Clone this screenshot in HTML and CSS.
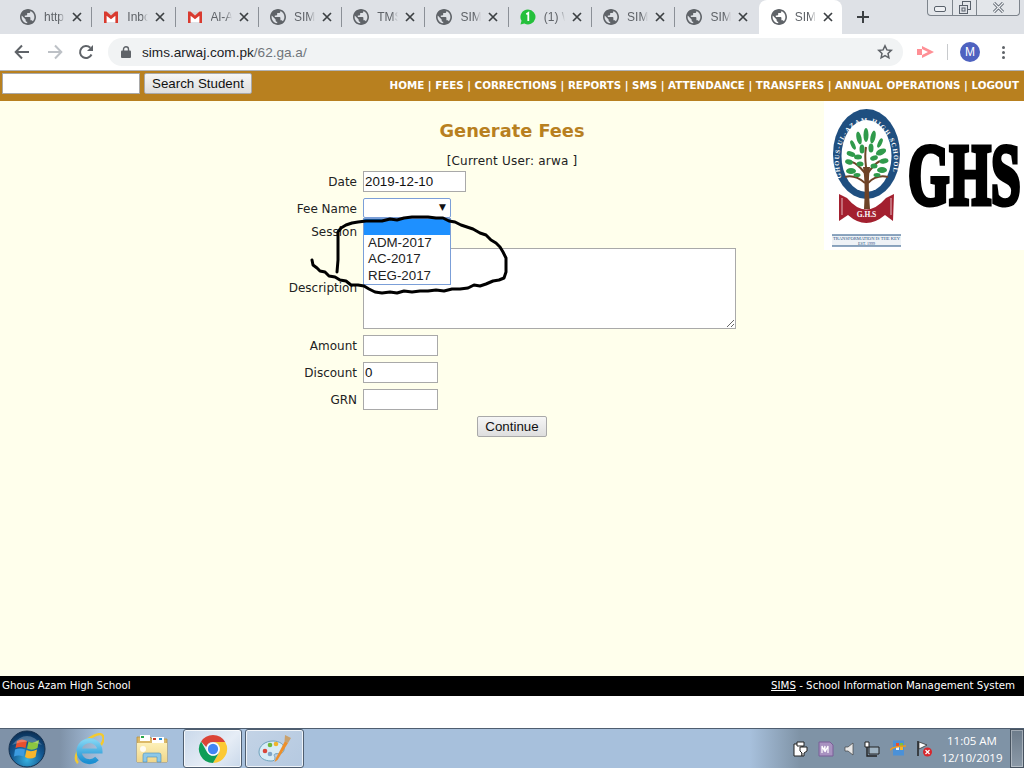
FILE: index.html
```html
<!DOCTYPE html>
<html lang="en">
<head>
  <meta charset="UTF-8">
  <title>Generate Fees | SIMS</title>
  <link rel="stylesheet" href="styles.css">
</head>
<body>

<svg class="defs" width="0" height="0">
  <symbol id="globe" viewBox="2 2 20 20"><path fill="#5f6368" d="M12 2C6.48 2 2 6.48 2 12s4.48 10 10 10 10-4.48 10-10S17.52 2 12 2zm-1 17.93c-3.95-.49-7-3.85-7-7.93 0-.62.08-1.21.21-1.79L9 15v1c0 1.1.9 2 2 2v1.93zm6.9-2.54c-.26-.81-1-1.39-1.9-1.39h-1v-3c0-.55-.45-1-1-1H8v-2h2c.55 0 1-.45 1-1V7h2c1.1 0 2-.9 2-2v-.41c2.93 1.19 5 4.06 5 7.41 0 2.08-.8 3.97-2.1 5.39z"/></symbol>
  <symbol id="gmail" viewBox="0 0 16 16"><path fill="#d6d6d6" d="M3 3h10v10H3z"/><path fill="#fff" d="M3 3l5 4 5-4v10H3z"/><path fill="#d93a2f" d="M1 2.500h2.500L8 6.500l4.500-4H15V14h-2.600V6.800L8 10.300 3.600 6.800V14H1z"/></symbol>
  <symbol id="whatsapp" viewBox="0 0 16 16"><path fill="#25c03c" d="M8 .5a7.500 7.500 0 1 1-3.600 14.100L.5 15.500l1-3.700A7.500 7.500 0 0 1 8 .5z"/><path fill="none" stroke="#fff" stroke-width="1.800" d="M6.300 5.200 8.300 3.900V12"/></symbol>
  <symbol id="close" viewBox="0 0 10 10"><path stroke="#3c4043" stroke-width="1.700" d="M1 1l8 8M9 1l-8 8"/></symbol>
</svg>

<div class="tab-strip">
  <div class="tab"><svg class="fav"><use href="#globe"/></svg><span class="tab-title">http</span><svg class="tab-x"><use href="#close"/></svg></div>
  <div class="tab"><svg class="fav"><use href="#gmail"/></svg><span class="tab-title">Inbo</span><svg class="tab-x"><use href="#close"/></svg></div>
  <div class="tab"><svg class="fav"><use href="#gmail"/></svg><span class="tab-title">Al-A</span><svg class="tab-x"><use href="#close"/></svg></div>
  <div class="tab"><svg class="fav"><use href="#globe"/></svg><span class="tab-title">SIM</span><svg class="tab-x"><use href="#close"/></svg></div>
  <div class="tab"><svg class="fav"><use href="#globe"/></svg><span class="tab-title">TMS</span><svg class="tab-x"><use href="#close"/></svg></div>
  <div class="tab"><svg class="fav"><use href="#globe"/></svg><span class="tab-title">SIM</span><svg class="tab-x"><use href="#close"/></svg></div>
  <div class="tab"><svg class="fav"><use href="#whatsapp"/></svg><span class="tab-title">(1) W</span><svg class="tab-x"><use href="#close"/></svg></div>
  <div class="tab"><svg class="fav"><use href="#globe"/></svg><span class="tab-title">SIM</span><svg class="tab-x"><use href="#close"/></svg></div>
  <div class="tab no-sep"><svg class="fav"><use href="#globe"/></svg><span class="tab-title">SIM</span><svg class="tab-x"><use href="#close"/></svg></div>
  <div class="tab active"><svg class="fav"><use href="#globe"/></svg><span class="tab-title">SIM</span><svg class="tab-x"><use href="#close"/></svg></div>
  <svg class="new-tab" width="14" height="14" viewBox="0 0 14 14"><path stroke="#3c4043" stroke-width="2" d="M7 1v12M1 7h12"/></svg>
  <div class="win-controls">
    <div class="win-btn min"><svg width="12" height="6" viewBox="0 0 12 6"><rect x=".5" y=".5" width="11" height="5" rx="1.500" fill="#eef0f3" stroke="#59616b"/></svg></div>
    <div class="win-btn max"><svg width="12" height="13" viewBox="0 0 12 13"><rect x="3.500" y=".5" width="8" height="8" fill="none" stroke="#59616b"/><rect x=".5" y="4.500" width="8" height="8" fill="#dee1e6" stroke="#59616b"/><rect x="3" y="7" width="3" height="3" fill="none" stroke="#59616b"/></svg></div>
    <div class="win-btn shut"><svg width="13" height="11" viewBox="0 0 13 11"><path d="M2 1l9 9M11 1l-9 9" stroke="#59616b" stroke-width="3"/><path d="M2 1l9 9M11 1l-9 9" stroke="#eef0f3" stroke-width="1.200"/></svg></div>
  </div>
</div>

<div class="toolbar">
  <svg class="tool-icon" width="16" height="16" viewBox="0 0 16 16"><path fill="none" stroke="#5f6368" stroke-width="2" d="M15 8H2M8 1.500 1.700 8 8 14.500"/></svg>
  <svg class="tool-icon forward" width="16" height="16" viewBox="0 0 16 16"><path fill="none" stroke="#bdc1c6" stroke-width="2" d="M1 8h13M8 1.500 14.300 8 8 14.500"/></svg>
  <svg class="tool-icon reload" width="16" height="16" viewBox="0 0 16 16"><path fill="none" stroke="#5f6368" stroke-width="2" d="M13.500 10.500A6 6 0 1 1 12.300 3.800"/><path fill="#5f6368" d="M15 1v6H9z"/></svg>
  <div class="omnibox">
    <svg class="lock" width="10" height="12" viewBox="0 0 10 12"><path fill="none" stroke="#5f6368" stroke-width="1.400" d="M2.500 5V3.300a2.500 2.500 0 0 1 5 0V5"/><rect y="4.500" width="10" height="7.500" rx="1" fill="#5f6368"/></svg>
    <span class="url">sims.arwaj.com.pk<span class="url-path">/62.ga.a/</span></span>
    <svg class="star" width="16" height="16" viewBox="0 0 16 16"><path fill="none" stroke="#5f6368" stroke-width="1.500" d="M8 1.800l1.900 4.100 4.400.5-3.300 3 .9 4.500L8 11.700l-3.900 2.200.9-4.500-3.300-3 4.400-.5z"/></svg>
  </div>
  <svg class="ext" width="17" height="12" viewBox="0 0 17 12"><path fill="#ff8f95" d="M0 3h5v6H0z"/><path fill="#ff8f95" d="M5 0l12 6-12 6V9l6-3-6-3z"/></svg>
  <span class="tool-sep"></span>
  <span class="avatar">M</span>
  <span class="kebab"><i></i><i></i><i></i></span>
</div>

<div class="page">
  <div class="top-nav">
    <form class="search">
      <input class="search-box" type="text">
      <button class="btn" type="button">Search Student</button>
    </form>
    <div class="links">HOME | FEES | CORRECTIONS | REPORTS | SMS | ATTENDANCE | TRANSFERS | ANNUAL OPERATIONS | LOGOUT</div>
  </div>

  <div class="content">
    <svg class="logo" width="200" height="149" viewBox="0 0 200 149">
      <rect width="200" height="149" fill="#fff"/>
      <ellipse cx="42.500" cy="53" rx="33.500" ry="45" fill="#1f4f80"/>
      <ellipse cx="42.500" cy="55" rx="25" ry="36" fill="#fff"/>
      <path id="ringText" d="M18 78A27.500 39 0 1 1 67 78" fill="none"/>
      <text class="ring-text"><textPath href="#ringText" startOffset="1%">GHOUS-UL-AZAM HIGH SCHOOL</textPath></text>
      <path d="M15 93 L23 97 Q42 120 62 97 L70 93 L69 120 L61 114 Q42 130 24 114 L15 120z" fill="#a3202f"/>
      <path d="M18 97 L18 114 M67 97 L67 114" stroke="#fff" stroke-width=".7"/>
      <path d="M40 108 C41 92 41 80 39 66 L46 66 C44 80 45 92 46 108z" fill="#6e4327"/>
      <path d="M41 82 C34 76 28 74 21 76 M44 82 C50 76 56 74 64 76 M41 72 C36 66 32 62 28 61 M44 72 C48 66 52 62 56 60 M42 66 C41 58 41 52 42 46" fill="none" stroke="#6e4327" stroke-width="2"/>
      <g fill="#2f9a4b">
        <ellipse cx="42" cy="34" rx="2.500" ry="7"/><ellipse cx="35" cy="37" rx="2.500" ry="6.500" transform="rotate(-12 35 37)"/><ellipse cx="49" cy="36" rx="2.500" ry="6.500" transform="rotate(12 49 36)"/>
        <ellipse cx="29" cy="44" rx="2" ry="5" transform="rotate(-25 29 44)"/><ellipse cx="56" cy="42" rx="2" ry="5" transform="rotate(25 56 42)"/><ellipse cx="38" cy="48" rx="2.500" ry="4.500"/>
        <ellipse cx="47" cy="47" rx="2.500" ry="4.500"/><ellipse cx="27" cy="53" rx="4.500" ry="2.500" transform="rotate(20 27 53)"/><ellipse cx="57" cy="51" rx="5.500" ry="3" transform="rotate(-25 57 51)"/>
        <ellipse cx="34" cy="56" rx="4" ry="2.500"/><ellipse cx="50" cy="57" rx="4" ry="2.500" transform="rotate(-20 50 57)"/><ellipse cx="25" cy="61" rx="4" ry="2.500" transform="rotate(15 25 61)"/>
        <ellipse cx="60" cy="60" rx="4.500" ry="2.500" transform="rotate(-10 60 60)"/><ellipse cx="36" cy="63" rx="3.500" ry="2.500"/><ellipse cx="50" cy="65" rx="3.500" ry="2.500"/>
        <ellipse cx="27" cy="70" rx="5" ry="3"/><ellipse cx="58" cy="69" rx="5" ry="3"/><ellipse cx="33" cy="74" rx="3.500" ry="2"/><ellipse cx="53" cy="74" rx="3.500" ry="2"/>
      </g>
      <text class="badge-ghs" x="42.500" y="116" text-anchor="middle">G.H.S</text>
      <rect x="8" y="134" width="69" height="11" fill="#eef2f6"/>
      <path d="M8 134h69M8 145h69" stroke="#1f4f80" stroke-width="1"/>
      <text class="badge-motto" x="42.500" y="139" text-anchor="middle" textLength="67" lengthAdjust="spacingAndGlyphs">TRANSFORMATION IS THE KEY</text>
      <text class="badge-est" x="42.500" y="144" text-anchor="middle">EST. 1999</text>
      <text class="logo-ghs" transform="translate(84 103) scale(.62 1)">GHS</text>
    </svg>

    <h1 class="title">Generate Fees</h1>
    <div class="current-user">[Current User: arwa ]</div>

    <form class="fee-form">
      <label>Date</label>
      <div><input class="field date" type="text" value="2019-12-10"></div>

      <label>Fee Name</label>
      <div class="select-wrap">
        <div class="select-box"><span class="caret">▼</span></div>
        <ul class="select-menu">
          <li class="on">&nbsp;</li>
          <li>ADM-2017</li>
          <li>AC-2017</li>
          <li>REG-2017</li>
        </ul>
      </div>

      <label class="session-label">Session</label>
      <div class="session-slot"></div>

      <label class="mid">Description</label>
      <div><textarea class="field notes"></textarea></div>

      <label>Amount</label>
      <div><input class="field short" type="text"></div>

      <label>Discount</label>
      <div><input class="field short" type="text" value="0"></div>

      <label>GRN</label>
      <div><input class="field short" type="text"></div>

      <div class="form-actions"><button class="btn" type="button">Continue</button></div>
    </form>

    <svg class="scribble" width="210" height="90" viewBox="300 210 210 90">
      <polyline points="312,260 313,265 317,268 320,271 325,272 329,276 335,277 340,280 346,281 351,285 358,285 364,286 369,289 375,292 382,293 390,292 397,293 404,291 412,292 420,291 428,291 436,290 444,291 452,289 460,289 468,288 474,285 480,286 486,284 493,281 499,280 504,278 506,272 506,265 506,258 503,252 500,247 496,243 491,240 486,235 480,233 473,229 467,227 461,225 455,222 449,221 443,218 436,218 428,217 420,217 412,217 404,218 397,220 390,219 382,221 374,221 366,221 358,222 352,223 346,225 341,228 338,232 338,240 338,250 338,260 337,272" fill="none" stroke="#000" stroke-width="3" stroke-linejoin="round" stroke-linecap="round"/>
    </svg>
  </div>

  <div class="footer">
    <span>Ghous Azam High School</span>
    <span><u>SIMS</u> - School Information Management System</span>
  </div>
  <div class="page-end"></div>
</div>

<div class="taskbar">
  <svg class="orb" width="38" height="38" viewBox="0 0 38 38">
    <defs>
      <radialGradient id="orbFill" cx=".5" cy=".8" r=".8"><stop offset="0" stop-color="#36b0e0"/><stop offset=".55" stop-color="#13568f"/><stop offset="1" stop-color="#0b2d52"/></radialGradient>
      <linearGradient id="ieBlue" x1="0" y1="0" x2="0" y2="1"><stop offset="0" stop-color="#7fd3f2"/><stop offset="1" stop-color="#1b8fd2"/></linearGradient>
      <linearGradient id="folderBody" x1="0" y1="0" x2="0" y2="1"><stop offset="0" stop-color="#fdf0b8"/><stop offset="1" stop-color="#f0d68a"/></linearGradient>
    </defs>
    <circle cx="19" cy="19" r="18" fill="url(#orbFill)" stroke="#16314f"/>
    <path d="M9 11 Q14 8 19 11 L17.500 18 Q12 16 7.500 18z" fill="#e8502e"/>
    <path d="M20.500 11.500 Q25 14 31 10 L29.500 18 Q24 21 19 18.500z" fill="#8cc63f"/>
    <path d="M7 19.500 Q12 17.500 17 19.500 L15.500 26.500 Q10.500 24.500 6 26.500z" fill="#3c9be0"/>
    <path d="M18.500 20 Q23 22.500 29 19.500 L27.500 27 Q22 30 17 27z" fill="#f7b52b"/>
    <path d="M4 15 Q19 -3 34 15 Q19 8 4 15z" fill="#fff" opacity=".25"/>
  </svg>
  <svg class="task-icon ie" width="30" height="32" viewBox="0 0 30 32">
    <path d="M4 30C-2 25 6 12 13 7 20 2 27 -1 29 3c1 2 0 6-2 9" fill="none" stroke="#f3c92f" stroke-width="2.400"/>
    <path d="M7.500 18H26A10.500 10.500 0 1 0 23 25.500" fill="none" stroke="url(#ieBlue)" stroke-width="5"/>
  </svg>
  <svg class="task-icon folder" width="32" height="29" viewBox="0 0 32 29">
    <path d="M1 3h13l2 2h15v23H1z" fill="#dcb968" stroke="#b79243" stroke-width=".8"/>
    <rect x="4" y="1" width="10" height="6" fill="#fff"/><rect x="5" y="2" width="3" height="2" fill="#2aa84a"/>
    <rect x="16" y="3" width="12" height="6" fill="#fff"/><rect x="17" y="4" width="3" height="2" fill="#c63a2b"/><rect x="23" y="4" width="3" height="2" fill="#2490d8"/>
    <path d="M1 9h30v19H1z" fill="url(#folderBody)"/>
    <path d="M7 28v-7a2 2 0 0 1 2-2h14a2 2 0 0 1 2 2v7h-4v-5H11v5z" fill="#8cc8e8" stroke="#4b8fb8" stroke-width=".6"/>
    <circle cx="7" cy="15" r="3" fill="#fff" opacity=".85"/>
  </svg>
  <div class="task-btn chrome">
    <svg width="30" height="30" viewBox="0 0 32 32">
      <path d="M16 1a15 15 0 0 1 13 7.500H16a7.500 7.500 0 0 0-7.200 5.300L3.300 8A15 15 0 0 1 16 1z" fill="#db4437"/>
      <path d="M29 8.500A15 15 0 0 1 16 31l6.500-11.300A7.500 7.500 0 0 0 22.200 12 7.500 7.500 0 0 0 16 8.500z" fill="#fcc934"/>
      <path d="M3.300 8l6.500 11.800A7.500 7.500 0 0 0 22.500 19.700L16 31A15 15 0 0 1 3.300 8z" fill="#0f9d58"/>
      <circle cx="16" cy="16" r="6.800" fill="#fff"/><circle cx="16" cy="16" r="5.500" fill="#4285f4"/>
    </svg>
  </div>
  <div class="task-btn paint">
    <svg width="34" height="30" viewBox="0 0 34 30">
      <path d="M15 7C7 7 1 12 1 18c0 6 6 9 12 9 3 0 4-1 4-3 0-2-2-3 0-4 2-1 8 1 9-4 1-6-5-9-11-9z" fill="#d8ecf6" stroke="#6fa2bd"/>
      <circle cx="7" cy="17" r="2.300" fill="#d9463a"/><circle cx="12" cy="11" r="2.300" fill="#6fb83f"/><circle cx="18" cy="10" r="2.300" fill="#efb52c"/><circle cx="12" cy="20" r="2.300" fill="#7ea6c9"/>
      <path d="M27 7 18 24l-1.500 4 3-2L30 9z" fill="#ed8f2a"/>
      <path d="M26.500 7.500 27 1l6 3-3 5z" fill="#caa16c"/>
    </svg>
  </div>
  <div class="tray">
    <svg width="15" height="16" viewBox="0 0 15 16"><path d="M1 3h8v12H1z" fill="#fff" stroke="#222"/><path d="M4 1h7v4H4z" fill="#fff" stroke="#222"/><path d="M7 6h7v4l-3 2v3H9v-3L7 10z" fill="#fff" stroke="#222"/></svg>
    <svg width="16" height="16" viewBox="0 0 16 16"><path d="M1 1h11l3 3v11H1z" fill="#a892c0" stroke="#7a5e98"/><path d="M4 12V5l2 4 1-4v6l3-6v7" fill="none" stroke="#fff" stroke-width="1.200"/></svg>
    <svg width="10" height="14" viewBox="0 0 10 14"><path d="M1 5h3l5-4v12l-5-4H1z" fill="#e8e8e8" stroke="#444" stroke-width=".7"/></svg>
    <svg width="16" height="16" viewBox="0 0 16 16"><path d="M5 6h10v7H5z" fill="#9fb3c2" stroke="#222"/><path d="M1 1h4v5H1z" fill="#fff" stroke="#222"/><path d="M3 6v9h10M7 15h6" fill="none" stroke="#222" stroke-width="1.400"/></svg>
    <svg width="16" height="17" viewBox="0 0 16 17"><rect x="3" y="0.500" width="11" height="15" fill="#4a91d8"/><path d="M6 3h3v3H6z" fill="#e8502e"/><path d="M10 3h3v3h-3z" fill="#7ebd3c"/><path d="M6 7h3v3H6z" fill="#e8f2fb"/><path d="M10 7h3v3h-3z" fill="#f7b52b"/><path d="M0 10c3-3 9-4 16-4" fill="none" stroke="#ef9a1e" stroke-width="1.600"/></svg>
    <svg width="16" height="17" viewBox="0 0 16 17"><path d="M2 1v15" stroke="#222" stroke-width="1.500"/><path d="M3 2l8 3-8 4z" fill="#fff" stroke="#222" stroke-width=".7"/><circle cx="11.500" cy="12" r="4.500" fill="#d8262c"/><path d="M9.500 10l4 4M13.500 10l-4 4" stroke="#fff" stroke-width="1.200"/></svg>
  </div>
  <div class="clock">
    <span>11:05 AM</span>
    <span>12/10/2019</span>
  </div>
  <div class="show-desktop"></div>
</div>

</body>
</html>
```

FILE: styles.css
```css
* {
  box-sizing: border-box;
}
html, body {
  margin: 0;
  height: 100%;
}
body {
  width: 1024px;
  height: 768px;
  overflow: hidden;
  display: flex;
  flex-direction: column;
  font-family: "DejaVu Sans", Verdana, sans-serif;
  font-size: 12px;
}
.defs {
  display: block;
  height: 0;
}

/* browser tabs */
.tab-strip {
  height: 34px;
  flex: none;
  display: flex;
  align-items: center;
  padding-left: 9px;
  background: #dee1e6;
  font-family: "Liberation Sans", Arial, sans-serif;
}
.tab {
  width: 83.3px;
  height: 34px;
  flex: none;
  display: flex;
  align-items: center;
  padding-left: 11px;
  background-image: linear-gradient(#8b9097, #8b9097);
  background-repeat: no-repeat;
  background-size: 1px 20px;
  background-position: right 7px;
}
.tab.no-sep {
  background-image: none;
}
.tab.active {
  background: #fff;
  border-radius: 8px 8px 0 0;
  padding-left: 12px;
}
.fav {
  width: 16px;
  height: 16px;
  flex: none;
  margin-right: 8px;
}
.tab-title {
  width: 21px;
  flex: none;
  white-space: nowrap;
  font-size: 12px;
  color: #5f6368;
  -webkit-mask-image: linear-gradient(to right, #000 70%, transparent);
  mask-image: linear-gradient(to right, #000 70%, transparent);
}
.tab-x {
  width: 10px;
  height: 10px;
  flex: none;
  margin-left: 7px;
}
.new-tab {
  margin-left: 14px;
  flex: none;
}
.win-controls {
  margin-left: auto;
  margin-right: 4px;
  align-self: flex-start;
  display: flex;
  width: 93px;
  height: 16px;
  border: 1px solid #7d848c;
  border-top: none;
  border-radius: 0 0 4px 4px;
  background: #e3e6ea;
}
.win-btn {
  display: flex;
  align-items: center;
  justify-content: center;
  border-right: 1px solid #7d848c;
}
.win-btn.min {
  width: 25px;
  padding-top: 3px;
}
.win-btn.max {
  width: 24px;
}
.win-btn.shut {
  flex: 1;
  border-right: none;
}

/* address bar */
.toolbar {
  height: 37px;
  flex: none;
  display: flex;
  align-items: center;
  background: #fff;
  border-bottom: 1px solid #b1b3b6;
  padding-left: 14px;
}
.tool-icon {
  flex: none;
}
.forward {
  margin-left: 17px;
}
.reload {
  margin-left: 15px;
}
.omnibox {
  width: 795px;
  height: 28px;
  margin-left: 14px;
  flex: none;
  display: flex;
  align-items: center;
  padding-left: 13px;
  background: #f1f3f4;
  border-radius: 14px;
}
.lock {
  flex: none;
}
.url {
  margin-left: 11px;
  font-family: "Liberation Sans", Arial, sans-serif;
  font-size: 13.6px;
  color: #202124;
}
.url-path {
  color: #70757a;
}
.star {
  margin-left: auto;
  margin-right: 10px;
}
.ext {
  margin-left: 14px;
  flex: none;
}
.tool-sep {
  width: 1px;
  height: 16px;
  margin-left: 13px;
  background: #c8cacd;
}
.avatar {
  width: 20px;
  height: 20px;
  margin-left: 12px;
  border-radius: 50%;
  background: #4e62c0;
  color: #fff;
  font-family: "Liberation Sans", Arial, sans-serif;
  font-size: 12px;
  line-height: 20px;
  text-align: center;
}
.kebab {
  margin-left: 22px;
  display: flex;
  flex-direction: column;
  gap: 2px;
}
.kebab i {
  width: 3px;
  height: 3px;
  border-radius: 50%;
  background: #5f6368;
}

/* the page itself */
.page {
  flex: 1;
  display: flex;
  flex-direction: column;
  min-height: 0;
}
.top-nav {
  height: 30px;
  flex: none;
  display: flex;
  align-items: flex-start;
  justify-content: space-between;
  background: #b8801f;
  padding: 2px 5px 0 2px;
}
.search {
  display: flex;
  gap: 4px;
}
.search-box {
  width: 138px;
  height: 21px;
  border: 1px solid #a9a9a9;
  background: #fff;
  padding: 0;
}
.btn {
  height: 21px;
  padding: 0 7px;
  border: 1px solid #a9a9a9;
  border-radius: 2px;
  background: linear-gradient(#f6f6f6, #dedede);
  color: #111;
  font-family: "Liberation Sans", Arial, sans-serif;
  font-size: 13.33px;
  line-height: 18px;
}
.links {
  margin-top: 6px;
  color: #fff;
  font-weight: bold;
  font-size: 10.3px;
  white-space: nowrap;
}
.content {
  position: relative;
  flex: 1;
  background: #ffffec;
  min-height: 0;
}
.logo {
  position: absolute;
  left: 824px;
  top: 0;
}
.ring-text {
  font-family: "Liberation Serif", serif;
  font-weight: bold;
  font-size: 6.5px;
  fill: #fff;
  letter-spacing: 1.1px;
}
.badge-ghs {
  font-family: "Liberation Serif", serif;
  font-weight: bold;
  font-size: 7.5px;
  fill: #fff;
}
.badge-motto {
  font-family: "Liberation Serif", serif;
  font-size: 5px;
  fill: #1f4f80;
}
.badge-est {
  font-family: "Liberation Serif", serif;
  font-size: 4px;
  fill: #1f4f80;
}
.logo-ghs {
  font-family: "Liberation Serif", serif;
  font-weight: bold;
  font-size: 86px;
  fill: #000;
  stroke: #000;
  stroke-width: 5px;
}
.title {
  margin: 0;
  padding-top: 19px;
  text-align: center;
  color: #b8801f;
  font-size: 17.8px;
  line-height: 22px;
  font-weight: bold;
}
.current-user {
  margin-top: 12px;
  height: 15px;
  line-height: 15px;
  text-align: center;
  letter-spacing: .2px;
  color: #222;
}
.fee-form {
  width: 448px;
  margin: 2px auto 0;
  display: grid;
  grid-template-columns: 75px 373px;
  row-gap: 6px;
}
.fee-form label {
  height: 21px;
  padding-top: 1px;
  padding-right: 6px;
  text-align: right;
  color: #222;
  line-height: 21px;
}
.fee-form label.mid {
  align-self: center;
  padding-top: 0;
}
.fee-form > div {
  display: flex;
}
.field {
  display: block;
  border: 1px solid #a9a9a9;
  background: #fff;
  padding: 1px;
  margin: 0;
  color: #111;
  font-family: "Liberation Sans", Arial, sans-serif;
  font-size: 13.33px;
}
.date {
  width: 103px;
  height: 21px;
}
.short {
  width: 75px;
  height: 21px;
}
.notes {
  width: 373px;
  height: 81px;
}
.select-wrap {
  position: relative;
}
.select-box {
  width: 88px;
  height: 20px;
  border: 1px solid #7b9fd8;
  border-radius: 2px;
  background: #fff;
  text-align: right;
  padding-right: 4px;
  font-size: 9px;
  line-height: 17px;
}
.caret {
  color: #111;
}
.select-menu {
  position: absolute;
  left: 0;
  top: 20px;
  z-index: 2;
  width: 88px;
  height: 67px;
  margin: 0;
  padding: 0;
  list-style: none;
  background: #fff;
  border: 1px solid #7b9fd8;
  font-family: "Liberation Sans", Arial, sans-serif;
  font-size: 13.33px;
  color: #222;
}
.select-menu li {
  height: 16.2px;
  line-height: 15px;
  padding-left: 4px;
}
.select-menu li.on {
  background: #1e90ff;
}
.fee-form .session-label {
  height: 17px;
  padding-top: 0;
  line-height: 15px;
}
.session-slot {
  height: 17px;
}
.form-actions {
  grid-column: 1 / 3;
  justify-content: center;
}
.scribble {
  position: absolute;
  left: 300px;
  top: 109px;
  z-index: 3;
}
.footer {
  height: 20px;
  flex: none;
  display: flex;
  justify-content: space-between;
  align-items: center;
  padding: 0 9px 3px 2px;
  background: #000;
  color: #fff;
  font-size: 10.25px;
}
.page-end {
  height: 32px;
  flex: none;
  background: #fff;
}

/* windows taskbar */
.taskbar {
  height: 40px;
  flex: none;
  display: flex;
  align-items: center;
  border-top: 1px solid #4f5e70;
  padding-left: 8px;
  background: linear-gradient(to right, #7f92a8 0, #7f92a8 60px, #a7c0dc 100px, #a7c0dc 750px, #7f93a6 800px, #7f93a6 100%);
  color: #fff;
}
.task-icon {
  flex: none;
}
.ie {
  margin-left: 28px;
}
.folder {
  margin-left: 32px;
}
.task-btn {
  width: 59px;
  height: 39px;
  flex: none;
  display: flex;
  align-items: center;
  justify-content: center;
  border: 1px solid #4f5e70;
  border-radius: 3px;
  box-shadow: inset 0 0 0 1px rgba(255, 255, 255, .75);
}
.chrome {
  margin-left: 15px;
  background: linear-gradient(135deg, #c9d8ea, #e6edf6 60%, #c9d8ea);
}
.paint {
  margin-left: 3px;
  background: linear-gradient(135deg, #c3d3e6, #b5c9e0);
}
.tray {
  margin-left: auto;
  display: flex;
  align-items: center;
  gap: 10px;
}
.clock {
  width: 70px;
  margin-left: 5px;
  margin-right: 3px;
  display: flex;
  flex-direction: column;
  align-items: center;
  font-family: "Open Sans", sans-serif;
  font-size: 11.5px;
  line-height: 17px;
  padding-top: 1px;
}
.show-desktop {
  width: 14px;
  height: 39px;
  flex: none;
  border: 1px solid #46525f;
  box-shadow: inset 0 0 0 1px rgba(255, 255, 255, .35);
  background: linear-gradient(#6d7c8b, #8b99a7);
}
```
